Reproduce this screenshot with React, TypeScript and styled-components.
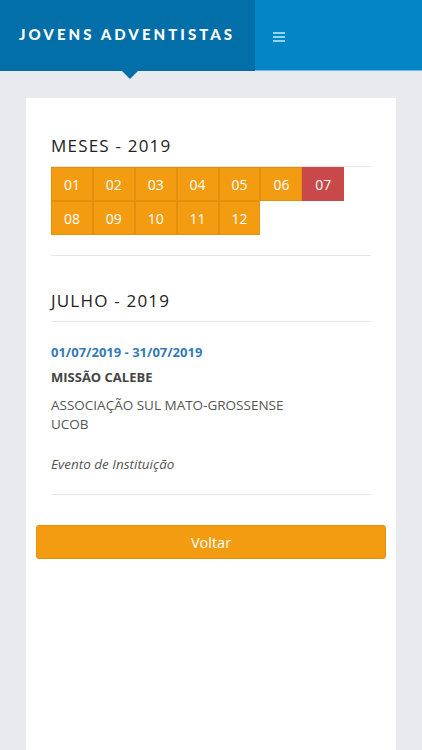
import React from "react";
import styled, { createGlobalStyle } from "styled-components";

const Global = createGlobalStyle`
  html, body { margin: 0; padding: 0; background: #e9eaee; }
  body { font-family: "Open Sans", "Liberation Sans", sans-serif; }
  * { box-sizing: border-box; }
`;

const Page = styled.div`
  min-height: 750px;
  display: flex;
  flex-direction: column;
  background: #e9eaee;
`;

const Header = styled.header`
  display: flex;
  height: 71px;
  background: #0385c6;
  border-bottom: 1px solid #6fb8e0;
`;

const Brand = styled.div`
  position: relative;
  width: 255px;
  height: 71px;
  margin-bottom: -1px;
  background: #026fa8;
  display: flex;
  align-items: center;
  padding-left: 19px;
  padding-bottom: 4px;
  color: #fff;
  font-family: "Lato", "Open Sans", sans-serif;
  font-weight: 900;
  font-size: 15px;
  letter-spacing: 3.05px;
  &::after {
    content: "";
    position: absolute;
    left: 122px;
    bottom: -8px;
    border-left: 8px solid transparent;
    border-right: 8px solid transparent;
    border-top: 8px solid #026fa8;
  }
`;

const MenuButton = styled.div`
  display: flex;
  align-items: center;
  padding-left: 18px;
  padding-top: 4px;
`;

const Main = styled.main`
  flex: 1;
  display: flex;
  padding: 27px 26px 0;
`;

const Card = styled.section`
  flex: 1;
  background: #fff;
  padding: 36px 10px 40px;
  display: flex;
  flex-direction: column;
`;

const Content = styled.div`
  padding: 0 15px;
`;

const Title = styled.h2`
  margin: 0;
  font-family: "Open Sans", sans-serif;
  font-weight: 400;
  font-size: 17px;
  line-height: 24px;
  letter-spacing: 1.2px;
  color: #222;
  padding-bottom: 8px;
  border-bottom: 1px solid #e6e6e6;
`;

const MonthSection = styled.div`
  padding-bottom: 20px;
  border-bottom: 1px solid #e6e6e6;
  margin-bottom: 33px;
`;

const Months = styled.div`
  display: flex;
  flex-wrap: wrap;
  width: 300px;
`;

const Month = styled.span<{ $active?: boolean }>`
  width: 41.9px;
  height: 34px;
  display: flex;
  align-items: center;
  justify-content: center;
  background: ${(p) => (p.$active ? "#c9484a" : "#f39c12")};
  border: 1px solid ${(p) => (p.$active ? "#c9484a" : "#e28f0c")};
  color: #fff;
  font-size: 14px;
`;

const Event = styled.div`
  padding-top: 21px;
  padding-bottom: 20px;
  border-bottom: 1px solid #e6e6e6;
  color: #555;
  font-size: 13.5px;
  line-height: 19px;
`;

const DateLine = styled.div`
  color: #337ab7;
  font-weight: 700;
  font-size: 13px;
  margin-bottom: 6px;
`;

const EventName = styled.div`
  font-weight: 700;
  font-size: 13px;
  color: #444;
  margin-bottom: 9px;
`;

const Org = styled.div`
  margin-bottom: 21px;
`;

const Kind = styled.div`
  font-style: italic;
`;

const Back = styled.button`
  margin-top: 30px;
  height: 34px;
  width: 100%;
  background: #f39c12;
  border: 1px solid #e28f0c;
  border-radius: 3px;
  color: #fff;
  font-family: "Open Sans", sans-serif;
  font-size: 14.5px;
`;

const months = ["01","02","03","04","05","06","07","08","09","10","11","12"];

export default function App() {
  return (
    <Page>
      <Global />
      <Header>
        <Brand>JOVENS ADVENTISTAS</Brand>
        <MenuButton>
          <svg width="12" height="10" viewBox="0 0 12 10">
            <rect x="0" y="0" width="12" height="2" fill="#8fd4f5" />
            <rect x="0" y="4" width="12" height="2" fill="#8fd4f5" />
            <rect x="0" y="8" width="12" height="2" fill="#8fd4f5" />
          </svg>
        </MenuButton>
      </Header>
      <Main>
        <Card>
          <Content>
            <Title>MESES - 2019</Title>
            <MonthSection>
              <Months>
                {months.map((m) => (
                  <Month key={m} $active={m === "07"}>{m}</Month>
                ))}
              </Months>
            </MonthSection>
            <Title>JULHO - 2019</Title>
            <Event>
              <DateLine>01/07/2019 - 31/07/2019</DateLine>
              <EventName>MISSÃO CALEBE</EventName>
              <Org>
                ASSOCIAÇÃO SUL MATO-GROSSENSE
                <br />
                UCOB
              </Org>
              <Kind>Evento de Instituição</Kind>
            </Event>
          </Content>
          <Back>Voltar</Back>
        </Card>
      </Main>
    </Page>
  );
}
